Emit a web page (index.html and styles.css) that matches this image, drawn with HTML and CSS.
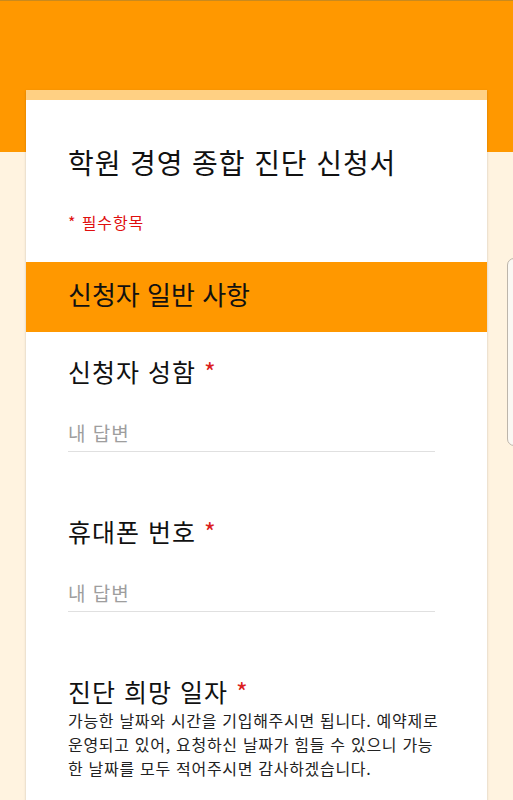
FILE: index.html
```html
<!DOCTYPE html>
<html lang="ko">
<head>
<meta charset="utf-8">
<link rel="stylesheet" href="styles.css">
</head>
<body>
<div class="page">
  <div class="card">
    <div class="card-head">
      <h1 class="title">학원 경영 종합 진단 신청서</h1>
      <div class="required-note">* 필수항목</div>
    </div>
    <div class="section-head">신청자 일반 사항</div>
    <div class="question">
      <div class="q-title">신청자 성함 <span class="star">*</span></div>
      <div class="answer">내 답변</div>
    </div>
    <div class="question">
      <div class="q-title">휴대폰 번호 <span class="star">*</span></div>
      <div class="answer">내 답변</div>
    </div>
    <div class="question">
      <div class="q-title">진단 희망 일자 <span class="star">*</span></div>
      <div class="q-desc">가능한 날짜와 시간을 기입해주시면 됩니다. 예약제로 운영되고 있어, 요청하신 날짜가 힘들 수 있으니 가능한 날짜를 모두 적어주시면 감사하겠습니다.</div>
    </div>
  </div>
</div>
<div class="edge-handle"></div>
</body>
</html>
```

FILE: styles.css
```css
html, body {
  margin: 0;
  padding: 0;
}
body {
  width: 513px;
  height: 800px;
  overflow: hidden;
  font-family: "Noto Sans CJK KR", "Noto Sans", sans-serif;
  color: #212121;
  background: linear-gradient(#c98a1e 0 1px, #ff9800 1px 152px, #fff3e0 152px);
}
.page {
  padding-top: 90px;
}
.card {
  margin: 0 26px;
  width: 461px;
  background: #fff;
  border-top: 10px solid #ffd083;
  box-shadow: 0 2px 1px -1px rgba(0,0,0,.2), 0 1px 1px 0 rgba(0,0,0,.14), 0 1px 3px 0 rgba(0,0,0,.12);
  min-height: 800px;
}
.card-head {
  padding: 42px 40px 29px 42px;
}
.title {
  margin: 0;
  font-size: 28px;
  line-height: 40px;
  font-weight: 400;
  letter-spacing: 0.9px;
  color: #111;
}
.required-note {
  margin-top: 29px;
  font-size: 16px;
  line-height: 22px;
  letter-spacing: 0.9px;
  color: #e00f0f;
}
.section-head {
  background: #ff9800;
  padding: 16px 40px 22px 42px;
  font-size: 26px;
  line-height: 32px;
  color: #111;
}
.question {
  padding: 23px 40px 40px 42px;
}
.q-title {
  font-size: 25px;
  line-height: 32px;
  letter-spacing: 1px;
  color: #111;
}
.star {
  color: #db2020;
}
.answer {
  margin-top: 33px;
  width: 367px;
  font-size: 19px;
  line-height: 26px;
  letter-spacing: 1px;
  color: #9e9e9e;
  padding-bottom: 5px;
  border-bottom: 1px solid #e0e0e0;
}
.q-desc {
  margin-top: 1px;
  font-size: 16px;
  line-height: 24px;
  letter-spacing: 0.7px;
  color: #222;
  word-break: break-all;
}
.edge-handle {
  position: absolute;
  left: 507px;
  top: 258px;
  width: 10px;
  height: 186px;
  background: #fbf8f3;
  border: 1px solid #bdb5ab;
  border-radius: 7px 0 0 7px;
}
```
